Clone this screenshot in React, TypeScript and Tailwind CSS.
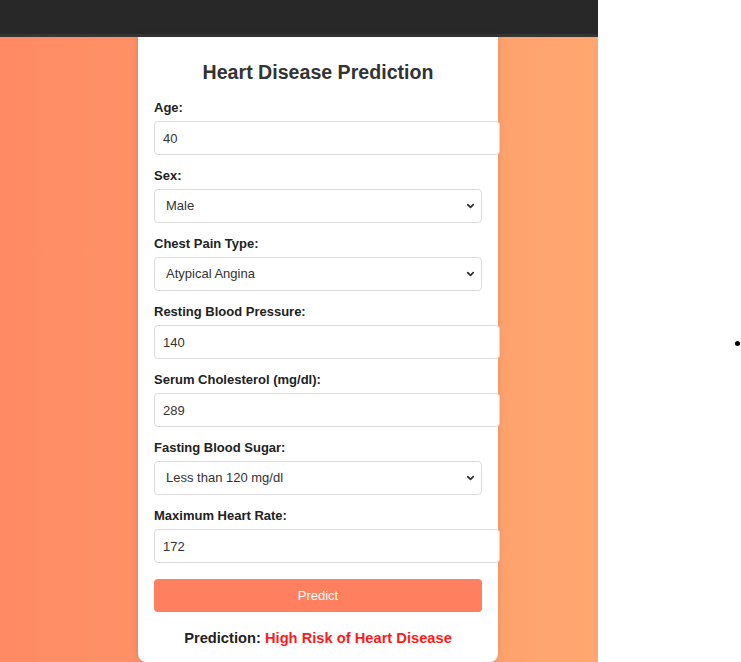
import React from "react";

const Chevron: React.FC = () => (
  <svg
    className="pointer-events-none absolute right-[7px] top-1/2 -translate-y-1/2 w-[9px] h-[9px]"
    viewBox="0 0 10 10"
    fill="none"
    stroke="#333"
    strokeWidth="2"
  >
    <path d="M2 3.5l3 3 3-3" strokeLinecap="round" strokeLinejoin="round" />
  </svg>
);

const TextField: React.FC<{ label: string; value: string }> = ({ label, value }) => (
  <div className="flex flex-col mb-[13px]">
    <label className="text-[13px] leading-[15px] font-bold text-[#222] mb-[6px]">{label}</label>
    <input
      readOnly
      value={value}
      className="h-[34px] w-[346px] px-[8px] border border-[#dcdcdc] rounded-[4px] text-[13px] text-[#333] bg-white outline-none"
    />
  </div>
);

const SelectField: React.FC<{ label: string; value: string }> = ({ label, value }) => (
  <div className="flex flex-col mb-[13px]">
    <label className="text-[13px] leading-[15px] font-bold text-[#222] mb-[6px]">{label}</label>
    <div className="relative w-[328px]">
      <select
        value={value}
        onChange={() => {}}
        className="appearance-none h-[34px] w-full pl-[11px] pr-6 border border-[#dcdcdc] rounded-[4px] text-[13px] text-[#333] bg-white outline-none"
      >
        <option>{value}</option>
      </select>
      <Chevron />
    </div>
  </div>
);

export default function App() {
  return (
    <div className="flex w-[741px] h-[662px] overflow-hidden bg-white font-['Liberation_Sans',Arial,sans-serif]">
      {/* page screenshot */}
      <div className="flex flex-col w-[598px] h-full">
        <div className="h-[37px] bg-[#282828] border-b-[3px] border-[#353535]" />
        <div className="flex-1 bg-gradient-to-r from-[#ff8a64] to-[#ffa770]">
          <div className="ml-[138px] w-[360px] bg-white rounded-b-[8px] px-4 pt-[23px] pb-[15px] shadow-[0_0_8px_rgba(0,0,0,0.12)]">
            <h2 className="text-center text-[19.6px] leading-[24px] font-bold text-[#333] mb-[16px]">
              Heart Disease Prediction
            </h2>
            <TextField label="Age:" value="40" />
            <SelectField label="Sex:" value="Male" />
            <SelectField label="Chest Pain Type:" value="Atypical Angina" />
            <TextField label="Resting Blood Pressure:" value="140" />
            <TextField label="Serum Cholesterol (mg/dl):" value="289" />
            <SelectField label="Fasting Blood Sugar:" value="Less than 120 mg/dl" />
            <TextField label="Maximum Heart Rate:" value="172" />
            <button className="mt-[3px] w-full h-[33px] rounded-[4px] bg-[#ff7f5f] text-white text-[13px]">
              Predict
            </button>
            <p className="mt-[17px] text-center text-[14.7px] leading-[18px] font-bold text-[#222]">
              Prediction: <span className="text-[#ff1a1a]">High Risk of Heart Disease</span>
            </p>
          </div>
        </div>
      </div>
      {/* side list */}
      <div className="flex-1 pl-[137px] pt-[341px]">
        <div className="w-[5px] h-[5px] rounded-full bg-black" />
      </div>
    </div>
  );
}
